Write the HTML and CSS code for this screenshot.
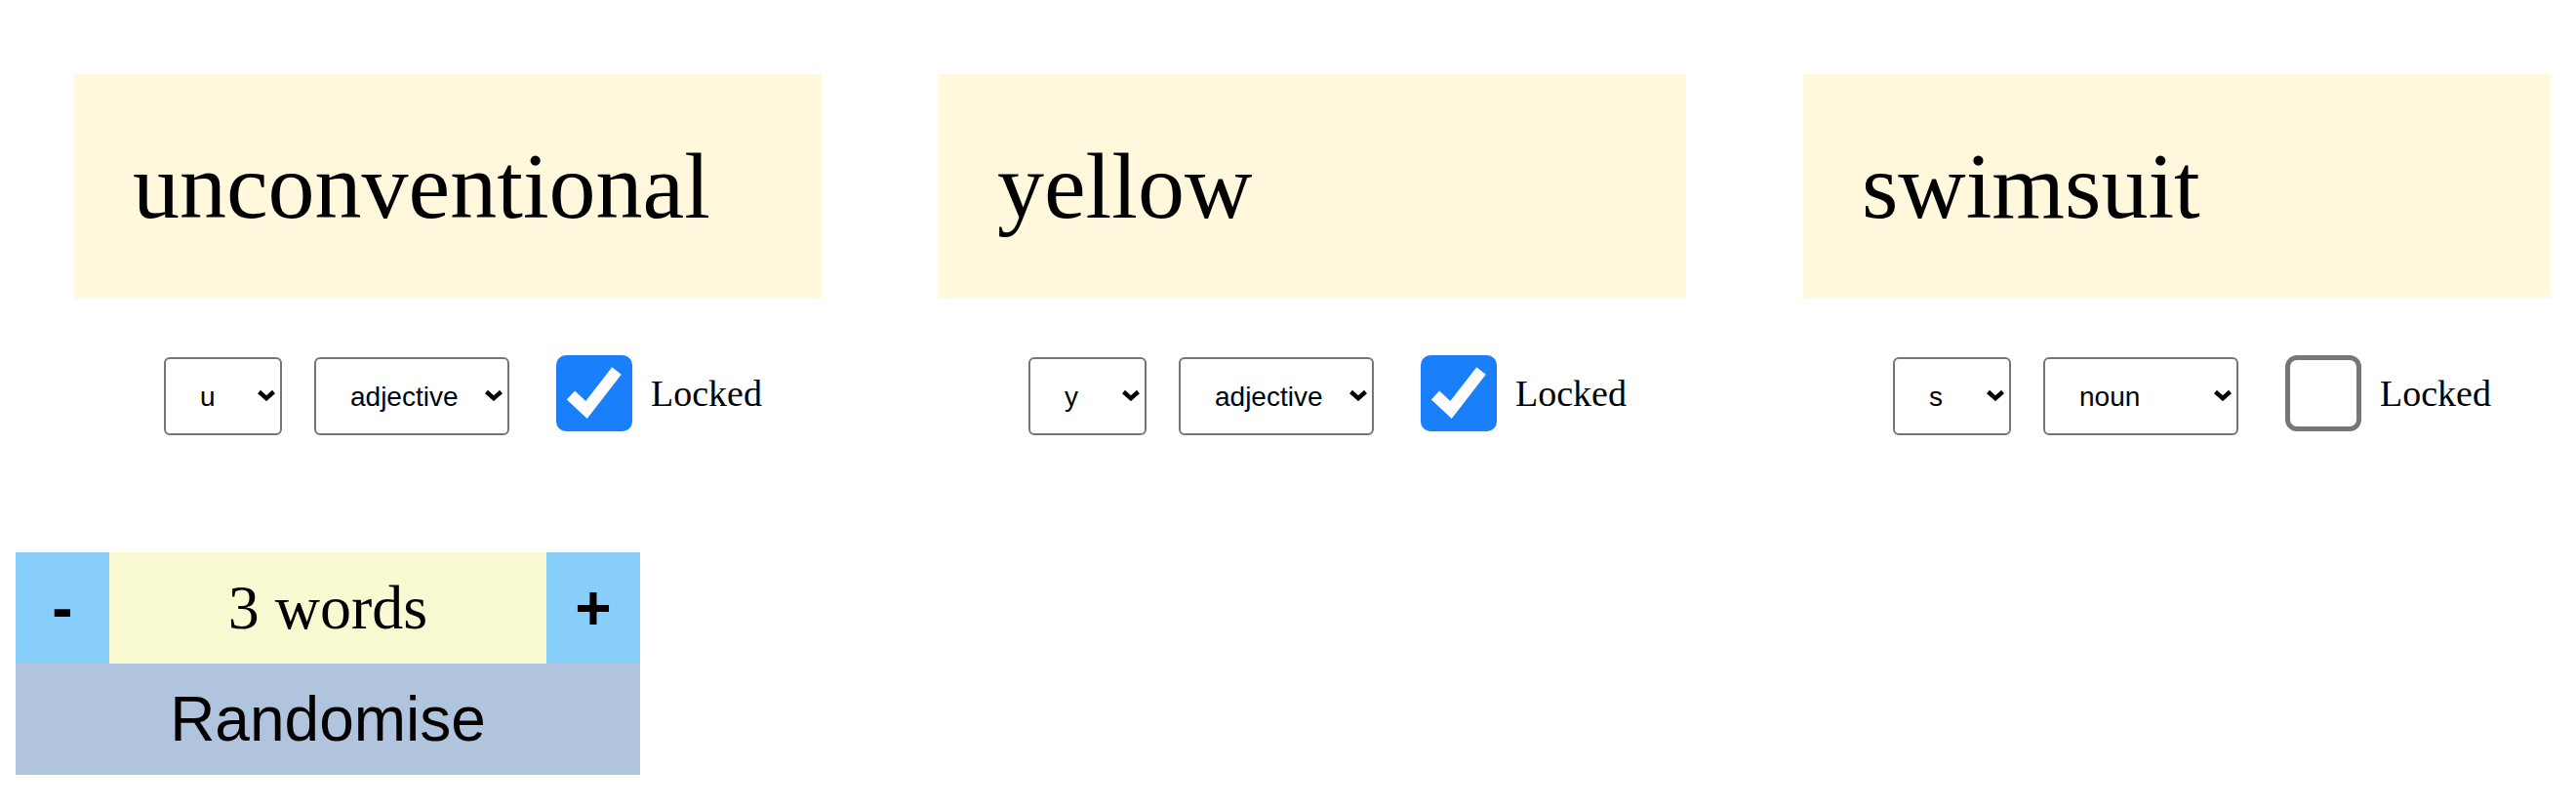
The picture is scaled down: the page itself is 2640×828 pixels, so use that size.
FILE: index.html
```html
<!DOCTYPE html>
<html lang="en">
<head>
<meta charset="utf-8">
<title>Word Randomiser</title>
<link rel="stylesheet" href="styles.css">
</head>
<body>
<main class="app">
  <section class="words">
    <div class="word">
      <div class="card">unconventional</div>
      <div class="controls">
        <div class="select-wrap letter">
          <select class="sel"><option>u</option></select>
          <svg class="chev" viewBox="0 0 20 12"><polyline points="2.5,2.5 10,9.2 17.5,2.5"/></svg>
        </div>
        <div class="select-wrap pos">
          <select class="sel"><option>adjective</option></select>
          <svg class="chev" viewBox="0 0 20 12"><polyline points="2.5,2.5 10,9.2 17.5,2.5"/></svg>
        </div>
        <label class="lock">
          <input class="lock-input" type="checkbox" checked>
          <span class="box on"><svg class="tick" viewBox="0 0 78 78"><polyline points="15,41 31,56 62,16"/></svg></span>
          <span class="lock-text">Locked</span>
        </label>
      </div>
    </div>
    <div class="word">
      <div class="card">yellow</div>
      <div class="controls">
        <div class="select-wrap letter">
          <select class="sel"><option>y</option></select>
          <svg class="chev" viewBox="0 0 20 12"><polyline points="2.5,2.5 10,9.2 17.5,2.5"/></svg>
        </div>
        <div class="select-wrap pos">
          <select class="sel"><option>adjective</option></select>
          <svg class="chev" viewBox="0 0 20 12"><polyline points="2.5,2.5 10,9.2 17.5,2.5"/></svg>
        </div>
        <label class="lock">
          <input class="lock-input" type="checkbox" checked>
          <span class="box on"><svg class="tick" viewBox="0 0 78 78"><polyline points="15,41 31,56 62,16"/></svg></span>
          <span class="lock-text">Locked</span>
        </label>
      </div>
    </div>
    <div class="word">
      <div class="card">swimsuit</div>
      <div class="controls">
        <div class="select-wrap letter">
          <select class="sel"><option>s</option></select>
          <svg class="chev" viewBox="0 0 20 12"><polyline points="2.5,2.5 10,9.2 17.5,2.5"/></svg>
        </div>
        <div class="select-wrap pos">
          <select class="sel"><option>noun</option></select>
          <svg class="chev" viewBox="0 0 20 12"><polyline points="2.5,2.5 10,9.2 17.5,2.5"/></svg>
        </div>
        <label class="lock">
          <input class="lock-input" type="checkbox">
          <span class="box off"></span>
          <span class="lock-text">Locked</span>
        </label>
      </div>
    </div>
  </section>
  <section class="counter">
    <div class="count-row">
      <button class="step">-</button>
      <div class="count">3 words</div>
      <button class="step">+</button>
    </div>
    <button class="randomise">Randomise</button>
  </section>
</main>
</body>
</html>
```

FILE: styles.css
```css
html, body {
  margin: 0;
  padding: 0;
  background: #ffffff;
}

body {
  font-family: "Liberation Serif", "Times New Roman", serif;
  color: #000;
}

.words {
  display: flex;
  gap: 120px;
  padding: 76px 0 0 76px;
}

.word {
  width: 766px;
  flex: none;
}

.card {
  background: #fff8dc;
  padding: 60px;
  font-size: 96px;
  line-height: 110px;
  white-space: nowrap;
}

.controls {
  display: flex;
  align-items: flex-start;
  margin-top: 58px;
  padding-left: 92px;
  height: 82px;
}

.select-wrap {
  position: relative;
  margin-top: 2px;
  flex: none;
}

.sel {
  -webkit-appearance: none;
  appearance: none;
  display: block;
  height: 80px;
  box-sizing: border-box;
  border: 2px solid #767676;
  border-radius: 6px;
  background: #ffffff;
  color: #000;
  font: 28px "Liberation Sans", Arial, sans-serif;
  padding: 0 0 0 35px;
  margin: 0;
  outline: none;
}

.letter .sel {
  width: 121px;
}

.pos {
  margin-left: 33px;
}

.pos .sel {
  width: 200px;
}

.chev {
  position: absolute;
  right: 6px;
  top: 33px;
  width: 20px;
  height: 12px;
  pointer-events: none;
  fill: none;
  stroke: #000;
  stroke-width: 4.4;
  stroke-linejoin: miter;
  stroke-linecap: butt;
}

.lock {
  display: flex;
  align-items: center;
  margin-left: 48px;
  height: 78px;
  flex: none;
}

.lock-input {
  display: none;
}

.box {
  display: block;
  width: 78px;
  height: 78px;
  box-sizing: border-box;
  border-radius: 10px;
}

.box.on {
  background: #1a7ffa;
}

.box.off {
  background: #ffffff;
  border: 5px solid #767676;
  border-radius: 12px;
}

.tick {
  display: block;
  width: 78px;
  height: 78px;
  fill: none;
  stroke: #ffffff;
  stroke-width: 12;
  stroke-linejoin: miter;
  stroke-linecap: butt;
}

.lock-text {
  margin-left: 19px;
  font-size: 38px;
}

.counter {
  width: 640px;
  margin: 120px 0 0 16px;
}

.count-row {
  display: flex;
  height: 114px;
}

.step {
  width: 96px;
  flex: none;
  border: none;
  border-radius: 0;
  padding: 0;
  margin: 0;
  background: #87cefa;
  color: #000;
  font: bold 64px "Liberation Sans", Arial, sans-serif;
}

.count {
  flex: 1;
  display: flex;
  align-items: center;
  justify-content: center;
  background: #fafad2;
  font-size: 64px;
}

.randomise {
  display: block;
  width: 100%;
  height: 114px;
  border: none;
  border-radius: 0;
  padding: 0;
  margin: 0;
  background: #b0c4de;
  color: #000;
  font: 64px "Liberation Sans", Arial, sans-serif;
}
```
